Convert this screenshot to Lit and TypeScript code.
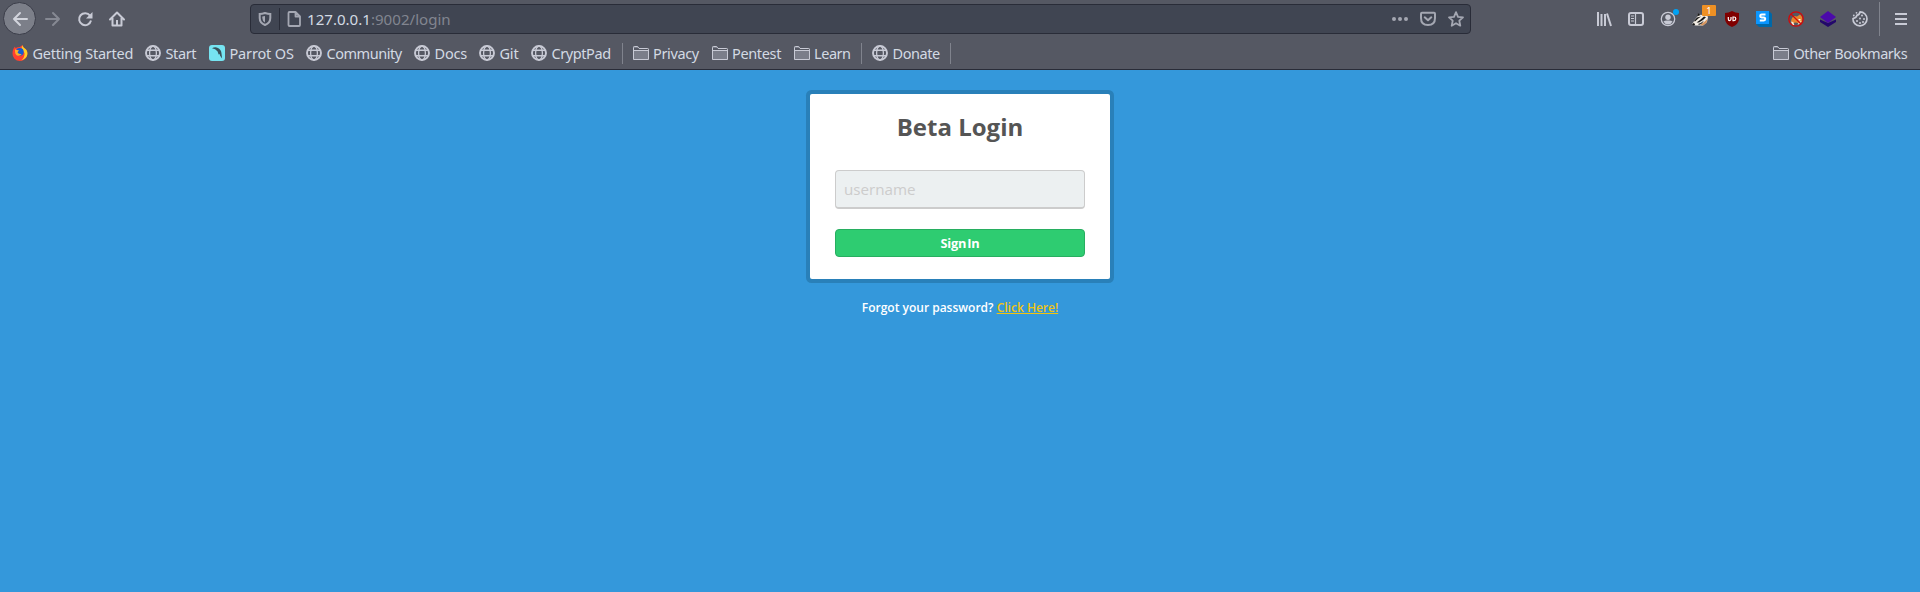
import { LitElement, html, css, svg } from "lit";
import { customElement } from "lit/decorators.js";
import { styleMap } from "lit/directives/style-map.js";

const globe = html`<svg width="16" height="16" viewBox="0 0 16 16" fill="none" stroke="#c8cad5"><circle cx="8" cy="8" r="7" stroke-width="1.9"/><ellipse cx="8" cy="8" rx="3.4" ry="7" stroke-width="1.3"/><path d="M2 5.3h12M2 10.7h12" stroke-width="1.4"/></svg>`;
const folder = html`<svg width="16" height="16" viewBox="0 0 16 16"><path d="M.5 14.5V2.3q0-.8.8-.8h3.4l1.2 2h8.8q.8 0 .8.8v10.2z" fill="#7b7e8a" stroke="#c8cad5"/><path d="M1 3h4.5l.4 1H15v1.5H1z" fill="#555863"/><path d="M.5 5.5h15" stroke="#c8cad5"/></svg>`;
const firefox = html`<svg width="16" height="16" viewBox="0 0 16 16"><path d="M1 5Q1.700 2.600 3 1.500q0 1 .8 1.600Q6 1.700 8 2q1-1.500 3-1.700-.5 2 1.500 3Q15.500 5 15.400 9A7.400 7.100 0 0 1 .5 8.500Q.5 6.500 1 5z" fill="#ff4030"/><path d="M11 .3q-.5 2 1.500 3Q15.500 5 15.400 9T9 15.500q4-3 3.500-7.500Q11 6 9.500 4 9.500 1.500 11 .3z" fill="#ffce22"/><circle cx="7.800" cy="6.800" r="3.900" fill="#145cd3"/><path d="M3 4.200q2 1.200 4 1L5.500 7.500Q7 9.500 9.700 9q-1.500 2.600-4.700 1.500Q2.500 9 3 4.200z" fill="#ffaf27"/></svg>`;
const parrot = html`<svg width="16" height="16" viewBox="0 0 16 16"><rect width="16" height="16" rx="3" fill="#76e4f1"/><path d="M3 3.300Q6 1.500 9 3q3.300 1.700 3.500 5.500l.6 5-2-2.800-.5-1.700-1 .5L8.600 6.500Q6.500 3.900 3 3.300z" fill="#39525b"/></svg>`;

const I = (body: unknown, cls = "") => html`<svg class="${cls}" width="16" height="16" viewBox="0 0 16 16" fill="none" stroke="#c8cad5" stroke-width="2">${body}</svg>`;

@customElement("app-root")
export class AppRoot extends LitElement {
  static styles = css`
    :host { display: block; height: 592px; background: #3498db; font-family: "Open Sans", sans-serif; overflow: hidden; }
    * { box-sizing: border-box; }
    svg { display: block; flex: none; overflow: visible; }
    .chrome { height: 70px; background: #555863; border-bottom: 1px solid #292c38; font: 15px/20px "Noto Sans", sans-serif; color: #d3dae3; white-space: nowrap; }
    .nav { height: 37px; display: flex; align-items: center; padding-left: 3px; }
    .back { width: 33px; height: 33px; border-radius: 50%; background: #7c7f89; border: 1px solid #3b3d49; display: grid; place-items: center; margin-right: 9px; }
    .gap { margin-right: 16px; }
    .home { margin-right: 125px; }
    .url { width: 1221px; height: 30px; border: 1px solid #292c38; border-radius: 4px; background: #404552; display: flex; align-items: center; padding: 0 6px; }
    .div { width: 1px; height: 22px; background: #292c38; margin: 0 7px 0 6px; }
    .addr { margin-left: 4px; flex: 1; line-height: 22px; font-size: 15.100px; }
    .dim { color: #828590; }
    .act { margin-left: 12px; }
    .tools { display: flex; gap: 16px; margin-left: 125px; align-items: center; }
    .privacy { position: relative; }
    .badge { position: absolute; left: 10px; top: -6px; width: 14px; height: 11px; border-radius: 1px; background: #ee9024; color: #fff; font: 9.500px/11px "Noto Sans", sans-serif; text-align: center; }
    .rule { width: 1px; height: 34px; background: #80838d; margin-left: 11px; }
    .menu { margin-left: 13px; }
    .marks { height: 32px; display: flex; align-items: center; gap: 12px; padding: 0 12px; }
    .mark { display: flex; align-items: center; gap: 4.500px; font-size: 14.500px; }
    .sep { width: 1px; height: 21px; background: #80838d; margin: 0 -2px; }
    .tight { margin-right: -3px; }
    .other { margin-left: auto; }
    .page { display: flex; flex-direction: column; align-items: center; padding-top: 24px; }
    .card { width: 300px; height: 185px; background: #fff; border-radius: 2px; box-shadow: 0 0 0 4px #2980b9; padding: 0 25px; text-align: center; }
    h1 { margin: 0; padding-top: 16px; height: 76px; font-size: 24px; line-height: 34px; font-weight: 700; color: #555; }
    .input { display: block; width: 250px; height: 39px; background: #ecf0f1; border: 1px solid #ccc; border-bottom-width: 2px; border-radius: 4px; padding: 0 8px; font: 15.200px "Open Sans", sans-serif; outline: none; }
    .input::placeholder { color: #ccc; opacity: 1; }
    .sign { display: block; margin-top: 20px; width: 250px; height: 28px; background: #2ecc71; border: 1px solid #27ae60; border-radius: 4px; color: #fff; font: 700 12.800px "Open Sans", sans-serif; letter-spacing: -.2px; word-spacing: -2px; padding: 0; }
    .forgot { margin: 19px 0 0; font-size: 12px; line-height: 20px; font-weight: 600; color: #fff; }
    .link { color: #f1c40f; text-decoration: underline; }
  `;
  mark(icon: unknown, text: string, width: number, spacing: number, cls = "") {
    return html`<div class="mark ${cls}">${icon}<span style=${styleMap({ width: width + "px", letterSpacing: spacing + "px" })}>${text}</span></div>`;
  }
  render() {
    return html`
      <div class="chrome">
        <div class="nav">
          <div class="back">${I(svg`<path d="M15 8H2M8 2 2 8l6 6" stroke="#d2d4dc" stroke-linecap="round" stroke-linejoin="round"/>`)}</div>
          ${I(svg`<path d="M1 8h13M8 2l6 6-6 6" stroke="#868993" stroke-linecap="round" stroke-linejoin="round"/>`, "gap")}
          ${I(svg`<path d="M13 4.600A6 6 0 1 0 14 9.500"/><path d="M15.500 1v6.500H9z" fill="#c8cad5" stroke="none"/>`, "gap")}
          ${I(svg`<path d="M1 8.500 8 1.500l7 7M3.500 7v7.500h9V7" stroke-linejoin="round" stroke-linecap="round"/><path d="M7 9h2v5H7z" fill="#c8cad5" stroke="none"/>`, "home")}
          <div class="url">
            ${I(svg`<path d="M8 2Q5 3 2.700 3v4q0 5 5.300 7 5.300-2 5.300-7V3Q11 3 8 2z" stroke="#a4a7b2"/><path d="M8 5v6.500Q5.300 10 5.300 7V5.500z" fill="#a4a7b2" stroke="none"/>`)}
            <div class="div"></div>
            ${I(svg`<path d="M2.500 1h6l4.500 4.500V14q0 1-1 1H2.500q-1 0-1-1V2q0-1 1-1zM8.500 1v4.500h4" stroke="#a4a7b2" stroke-width="1.800" stroke-linejoin="round"/>`)}
            <div class="addr">127.0.0.1<span class="dim">:9002/login</span></div>
            ${I(svg`<g fill="#a4a7b2" stroke="none"><circle cx="2" cy="8" r="2"/><circle cx="8" cy="8" r="2"/><circle cx="14" cy="8" r="2"/></g>`)}
            ${I(svg`<path d="M2 1.800h12q1 0 1 1V7q0 7-7 7T1 7V2.800q0-1 1-1z" stroke="#a4a7b2"/><path d="m4.700 6.300 3.300 3 3.300-3" stroke="#a4a7b2" stroke-linecap="round" stroke-linejoin="round"/>`, "act")}
            ${I(svg`<path d="m8 1.200 2 4.600 5 .5-3.700 3.400 1 5L8 12.200l-4.300 2.500 1-5L1 6.300l5-.5z" stroke="#a4a7b2" stroke-width="1.800" stroke-linejoin="round"/>`, "act")}
          </div>
          <div class="tools">
            ${I(svg`<path d="M2 1v14M5.500 3v12M9 3v12M11 2.500 15 15"/>`)}
            ${I(svg`<rect x="1" y="2" width="14" height="12" rx="2"/><path d="M7.500 2v12" stroke-width="1.200"/><path d="M3 5h3M3 7.500h3M3 10h3" stroke-width="1"/>`)}
            ${I(svg`<circle cx="8" cy="8" r="6.700" stroke-width="1.300"/><circle cx="8" cy="6.300" r="2.700" fill="#c8cad5" stroke="none"/><path d="M3.400 10.500Q5 9.300 8 9.600q3-.3 4.600.9Q11 13.500 8 13.500t-4.600-3z" fill="#c8cad5" stroke="none"/><circle cx="16" cy="1" r="3" fill="#00a2f4" stroke="none"/>`)}
            <div class="privacy">${I(svg`<g stroke="none"><path d="M0 13.500 3 8.500 5 6l1-3.500L9 4l5-1 2 3-1 5-4 3.500H3z" fill="#f4eee6"/><path d="M2 10 5 6.500l4-1-3 2.300-3 2.700zM4.500 11.500 8 9l4-3.500 2 .8-3 2.700-4 2.500z" fill="#171717"/><path d="M0 13.500l2-1.700 1.300 2.500H1zM5 5.500 6 2l2.500 2z" fill="#171717"/><path d="m8 14 4-3 3.500-3-1 4-3.500 2.500z" fill="#d7955e"/><path d="m6 13 3-1.200 3-2.300-2 3-3 1.500z" fill="#333"/></g>`)}<span class="badge">1</span></div>
            ${I(svg`<path d="M8 0q3.500 2 7 2v6q0 5-7 8-7-3-7-8V2q3.500 0 7-2z" fill="#800000" stroke="none"/><path d="M4.300 6v2q0 1.600 1.300 1.600T7 8V6" stroke="#fff" stroke-width="1.200"/><path d="M9 6h1q1.800 0 1.800 1.800T10 9.600H9z" stroke="#fff" stroke-width="1.200"/>`)}
            ${I(svg`<path d="M0 0h13l3 3v13H3l-3-3z" fill="#0068a8" stroke="none"/><path d="M0 0h13v13H0z" fill="#0b96ff" stroke="none"/><path d="M9.500 3.500H5.700q-1.500 0-1.500 1.400t1.500 1.500h2q1.500 0 1.500 1.500T7.700 9.600H3.800" stroke="#fff" stroke-width="2"/>`)}
            ${I(svg`<path d="m6 5 3 .5 3-2 2.500 3L14 11l-3 1.500-3-1-3 .5-2-2 1-3z" fill="#e8862d" stroke="none"/><path d="m2.800 10.500 2.500.5 1 3H4.500zM11.500 10.500l2-.5-2 3-2 .8z" fill="#ffe8cc" stroke="none"/><path d="M10.500 8h2v1.500h-2z" fill="#fff" stroke="none"/><circle cx="8" cy="8" r="7.200" stroke="#d40808" stroke-width="1.300"/><path d="m3 3 10 10" stroke="#d40808" stroke-width="1.300"/>`)}
            ${I(svg`<path d="M0 8.500 8 12l8-3.500V11l-8 5-8-5z" fill="#23086b" stroke="none"/><path d="m8 0 8 6-8 6-8-6z" fill="#4b0aaa" stroke="none"/>`)}
            ${I(svg`<path d="M8 .900Q7.500 4 5 4.200 4.500 7 1 7.500A7 7 0 1 0 8 .900z" stroke-width="1.700" stroke-linejoin="round"/><g fill="#c8cad5" stroke="none"><circle cx="10" cy="4.500" r="1"/><circle cx="12" cy="8" r="1"/><circle cx="8" cy="7.500" r="1"/><circle cx="5" cy="10" r="1"/><circle cx="8" cy="12" r="1"/><circle cx="11" cy="11" r="1"/><circle cx="1.800" cy="4.500" r=".9"/><circle cx="4.500" cy="1.800" r=".9"/></g>`)}
          </div>
          <div class="rule"></div>
          ${I(svg`<path d="M2 3h12M2 8h12M2 13h12"/>`, "menu")}
        </div>
        <div class="marks">
          ${this.mark(firefox, "Getting Started", 100.5, -0.24)}
          ${this.mark(globe, "Start", 31.5, -0.4)}
          ${this.mark(parrot, "Parrot OS", 64.5, -0.15)}
          ${this.mark(globe, "Community", 75.5, -0.46)}
          ${this.mark(globe, "Docs", 32.5, -0.2)}
          ${this.mark(globe, "Git", 19.5, -0.2)}
          ${this.mark(globe, "CryptPad", 60, -0.42)}
          <i class="sep"></i>
          ${this.mark(folder, "Privacy", 46.5, -0.35)}
          ${this.mark(folder, "Pentest", 49.5, -0.35)}
          ${this.mark(folder, "Learn", 37, -0.45)}
          <i class="sep"></i>
          ${this.mark(globe, "Donate", 47.5, -0.45)}
          <i class="sep"></i>
          ${this.mark(folder, "Other Bookmarks", 114.500, -0.46, "other")}
        </div>
      </div>
      <div class="page">
        <form class="card">
          <h1>Beta Login</h1>
          <input class="input" type="text" placeholder="username" />
          <button class="sign" type="button">Sign In</button>
        </form>
        <p class="forgot">Forgot your password? <a class="link" href="#">Click Here!</a></p>
      </div>`;
  }
}
